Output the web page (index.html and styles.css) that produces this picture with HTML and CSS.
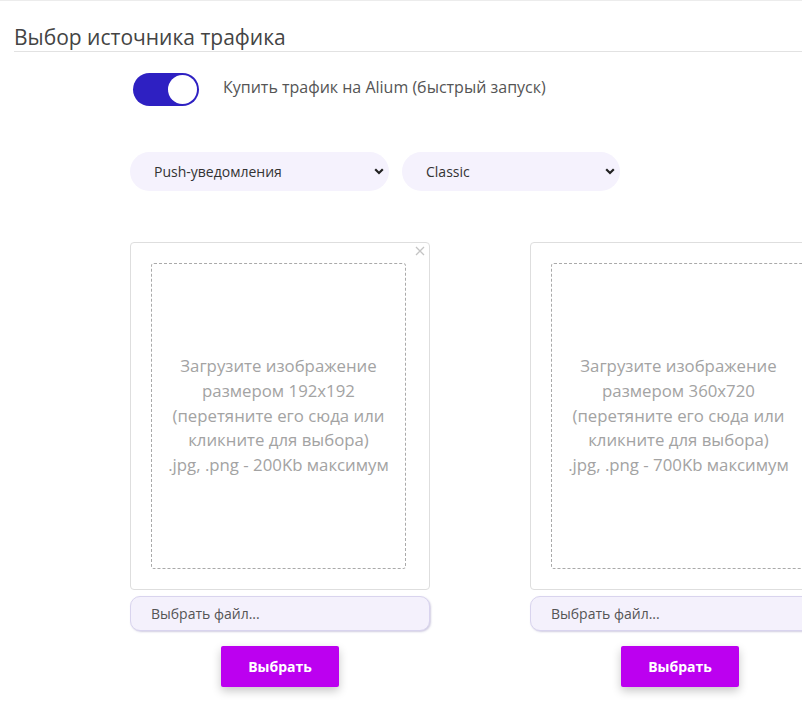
FILE: index.html
```html
<html>
    <head>
        <title>Выбор источника трафика</title>
        <link rel="stylesheet" href="styles.css">
    </head>
    <body>
        <div class="page">
            <h2 class="sectionTitle">Выбор источника трафика</h2>

            <div class="toggleRow">
                <div class="toggle">
                    <div class="toggleKnob"></div>
                </div>
                <span class="toggleLabel">Купить трафик на Alium (быстрый запуск)</span>
            </div>

            <div class="selectRow">
                <div class="selectBox selectWide">
                    <span>Push-уведомления</span>
                    <svg class="chevron" width="10" height="7" viewBox="0 0 10 7"><path d="M1.2 1.3 L5 5 L8.8 1.3" fill="none" stroke="#222" stroke-width="2.2"/></svg>
                </div>
                <div class="selectBox selectNarrow">
                    <span>Classic</span>
                    <svg class="chevron" width="10" height="7" viewBox="0 0 10 7"><path d="M1.2 1.3 L5 5 L8.8 1.3" fill="none" stroke="#222" stroke-width="2.2"/></svg>
                </div>
            </div>

            <div class="uploadRow">
                <div class="uploadColumn">
                    <div class="uploadCard">
                        <svg class="closeIcon" width="10" height="10" viewBox="0 0 10 10"><path d="M1 1 L9 9 M9 1 L1 9" stroke="#c4c4c4" stroke-width="1.3"/></svg>
                        <div class="dropZone">
                            Загрузите изображение<br>
                            размером 192x192<br>
                            (перетяните его сюда или<br>
                            кликните для выбора)<br>
                            .jpg, .png - 200Kb максимум
                        </div>
                    </div>
                    <div class="fileInput">Выбрать файл...</div>
                    <button class="pickButton">Выбрать</button>
                </div>

                <div class="uploadColumn">
                    <div class="uploadCard">
                        <div class="dropZone">
                            Загрузите изображение<br>
                            размером 360x720<br>
                            (перетяните его сюда или<br>
                            кликните для выбора)<br>
                            .jpg, .png - 700Kb максимум
                        </div>
                    </div>
                    <div class="fileInput">Выбрать файл...</div>
                    <button class="pickButton">Выбрать</button>
                </div>
            </div>
        </div>
    </body>
</html>
```

FILE: styles.css
```css
body
{
    margin: 0;
    padding: 0;
    font-family: "Open Sans", "Liberation Sans", sans-serif;
    color: #444;
    background: #fff;
    overflow: hidden;
}
.page
{
    border-top: 1px solid #ececec;
    width: 100%;
    height: 100vh;
    box-sizing: border-box;
    overflow: hidden;
}
.sectionTitle
{
    margin: 0 0 0 14px;
    padding-top: 22px;
    font-size: 21px;
    font-weight: 400;
    color: #444;
    border-bottom: 1px solid #e2e2e2;
}
.toggleRow
{
    display: flex;
    align-items: center;
    margin: 21px 0 0 133px;
}
.toggle
{
    width: 66px;
    height: 33px;
    border-radius: 17px;
    background-color: #2e20c2;
    display: flex;
    justify-content: flex-end;
    align-items: center;
    padding-right: 2px;
    box-sizing: border-box;
    flex-shrink: 0;
}
.toggleKnob
{
    width: 29px;
    height: 29px;
    border-radius: 50%;
    background: #fff;
}
.toggleLabel
{
    margin-left: 24px;
    padding-bottom: 5px;
    font-size: 16px;
    color: #555;
}
.selectRow
{
    display: flex;
    gap: 13px;
    margin: 46px 0 0 130px;
}
.selectBox
{
    height: 39px;
    border-radius: 20px;
    background-color: #f5f2fd;
    display: flex;
    align-items: center;
    justify-content: space-between;
    padding: 0 5px 0 24px;
    box-sizing: border-box;
    font-size: 14px;
    color: #333;
    flex-shrink: 0;
}
.selectWide
{
    width: 259px;
}
.selectNarrow
{
    width: 218px;
}
.uploadRow
{
    display: flex;
    gap: 100px;
    margin: 51px 0 0 130px;
}
.uploadColumn
{
    width: 300px;
    flex-shrink: 0;
    display: flex;
    flex-direction: column;
    align-items: center;
}
.uploadCard
{
    position: relative;
    width: 300px;
    height: 348px;
    box-sizing: border-box;
    border: 1px solid #dedede;
    border-radius: 4px;
    padding: 20px 23px 20px 20px;
}
.closeIcon
{
    position: absolute;
    top: 3px;
    right: 4px;
}
.dropZone
{
    height: 100%;
    box-sizing: border-box;
    border: 1px dashed #aaa;
    border-radius: 3px;
    display: flex;
    align-items: center;
    justify-content: center;
    text-align: center;
    font-size: 16.8px;
    line-height: 24.7px;
    color: #a3a3a3;
}
.fileInput
{
    width: 300px;
    height: 35px;
    margin-top: 6px;
    box-sizing: border-box;
    border: 1px solid #d9d4ee;
    border-radius: 10px;
    background-color: #f4f1fc;
    box-shadow: 1px 1px 2px rgba(120, 110, 170, 0.35);
    padding-left: 20px;
    line-height: 33px;
    font-size: 14px;
    color: #555;
}
.pickButton
{
    margin-top: 15px;
    width: 118px;
    height: 41px;
    border: none;
    border-radius: 2px;
    background-color: #bc00f0;
    color: #fff;
    font-family: "Open Sans", "Liberation Sans", sans-serif;
    font-weight: 700;
    font-size: 14px;
    box-shadow: 0 4px 10px rgba(0, 0, 0, 0.22);
}
```
